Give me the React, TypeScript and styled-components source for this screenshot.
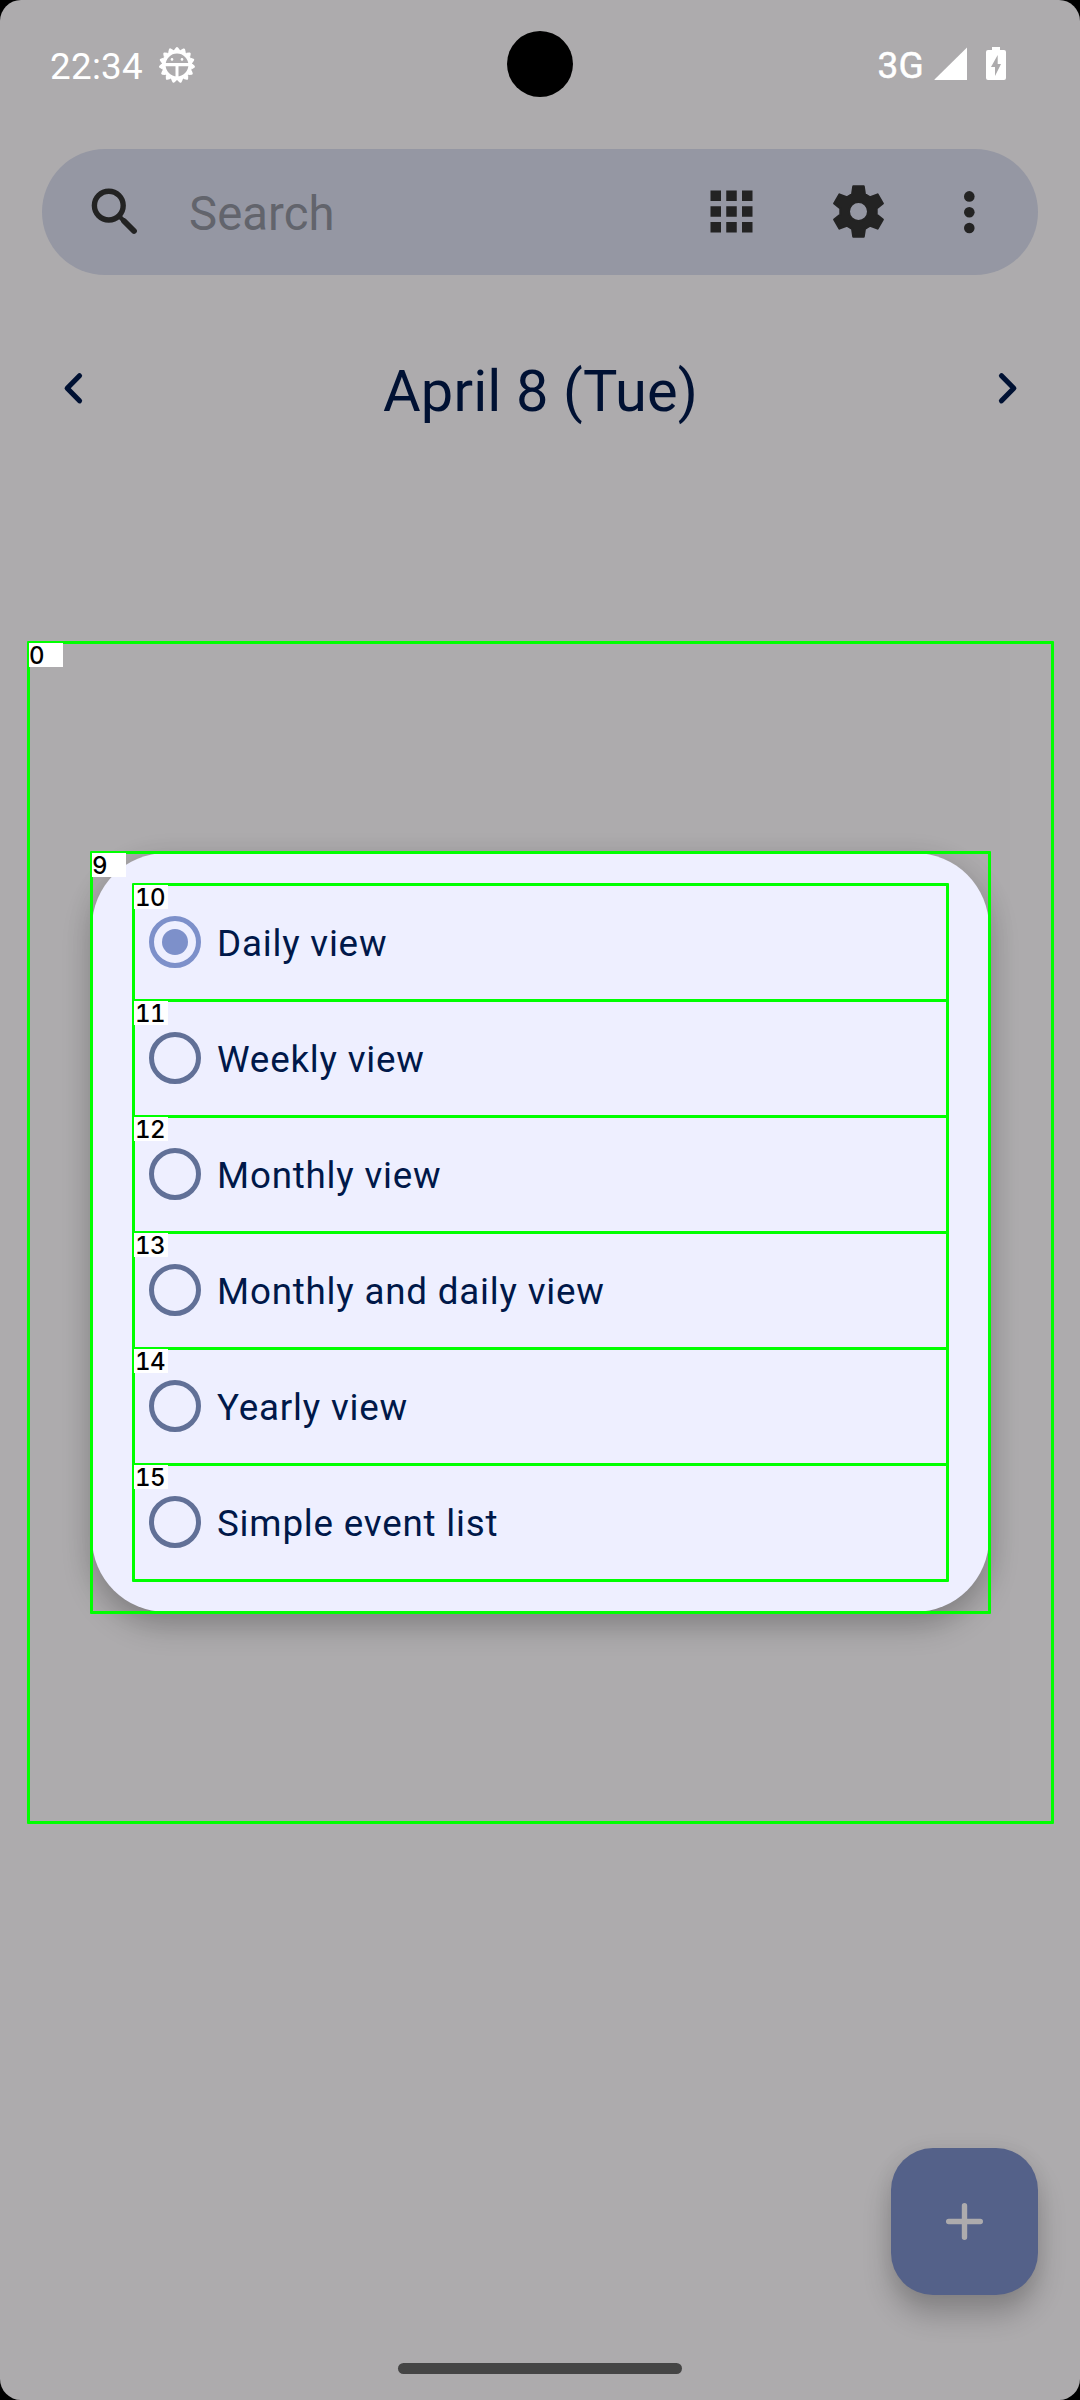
import React from "react";
import styled, { createGlobalStyle, css } from "styled-components";

const color = {
  page: "#adabad",
  bar: "#9597a3",
  icon: "#232323",
  hint: "#62646c",
  title: "#001133",
  card: "#eeefff",
  label: "#001849",
  radio: "#617097",
  radioOn: "#7d90ca",
  fab: "#546189",
  frame: "#00ff00",
};

const GlobalStyle = createGlobalStyle`
  body { margin: 0; background: #000; }
  * { box-sizing: border-box; }
`;

const Screen = styled.main`
  position: relative;
  display: flex;
  flex-direction: column;
  width: 1080px;
  height: 2400px;
  overflow: hidden;
  border-radius: 21px;
  background: ${color.page};
  font-family: Roboto, sans-serif;
`;

const StatusBar = styled.header`
  display: flex;
  justify-content: space-between;
  height: 149px;
  padding: 44px 72px 0 50px;
  color: #fff;
`;

const StatusGroup = styled.div`
  display: flex;
  align-items: flex-start;
`;

const Clock = styled.span`
  margin-top: 1px;
  font-size: 36.75px;
  line-height: 43px;
  letter-spacing: 0.3px;
`;

const Network = styled.span`
  font-size: 37px;
  line-height: 43px;
  letter-spacing: 0.2px;
  -webkit-text-stroke: 0.5px #fff;
`;

const Camera = styled.div`
  position: absolute;
  top: 31px;
  left: 507px;
  width: 66px;
  height: 66px;
  border-radius: 50%;
  background: #000;
`;

const Icon = styled.svg`
  display: block;
  flex: none;
`;

const SearchBar = styled.div`
  display: flex;
  align-items: center;
  flex: none;
  height: 126px;
  margin: 0 42px;
  padding: 0 37px 0 42px;
  border-radius: 63px;
  background: ${color.bar};
  color: ${color.icon};
`;

const SearchHint = styled.span`
  flex: 1;
  margin-left: 42px;
  padding-top: 3px;
  color: ${color.hint};
  font-size: 47.25px;
  line-height: 56px;
  letter-spacing: 0.1px;
`;

const BarActions = styled.div`
  display: grid;
  grid-template-columns: 127px 111px 63px;
  align-items: center;
  margin-bottom: 1px;
`;

const DateNav = styled.nav`
  display: flex;
  align-items: center;
  justify-content: space-between;
  height: 226px;
  padding: 0 41px 0 42px;
  color: ${color.title};
`;

const DateTitle = styled.h1`
  margin: 6px 0 0;
  font-size: 57.75px;
  line-height: 68px;
  font-weight: 400;
  letter-spacing: 0.15px;
`;

const Fab = styled.button`
  position: absolute;
  right: 42px;
  bottom: 105px;
  display: grid;
  place-items: center;
  width: 147px;
  height: 147px;
  padding: 0;
  border: 0;
  border-radius: 42px;
  background: ${color.fab};
  color: ${color.page};
  box-shadow: 0 20px 28px rgba(0, 0, 0, 0.22), 0 0 20px rgba(0, 0, 0, 0.06);
`;

const HomeHandle = styled.div`
  align-self: center;
  width: 284px;
  height: 11px;
  margin: auto 0 26px;
  border-radius: 6px;
  background: #454545;
`;

const DialogLayer = styled.div`
  position: absolute;
  inset: 0;
  display: flex;
  align-items: flex-start;
  padding: 643px 28px 0 29px;
`;

/* Green outline drawn over an element, straddling its edge. */
const framed = css<{ $bottom?: number }>`
  position: relative;
  &::after {
    content: "";
    position: absolute;
    inset: -2px -2px ${(p) => p.$bottom ?? -2}px -2px;
    border: 3px solid ${color.frame};
    border-radius: 1px;
    pointer-events: none;
  }
`;

const WindowArea = styled.div`
  ${framed}
  display: grid;
  place-items: center;
  width: 1023px;
  height: 1179px;
`;

const CardFrame = styled.div`
  ${framed}
  width: 897px;
  height: 759px;
`;

const Card = styled.section`
  height: 100%;
  padding: 32px 42px;
  border-radius: 74px;
  background: ${color.card};
  box-shadow: 0 14px 30px rgba(0, 0, 0, 0.21), 0 4px 30px rgba(0, 0, 0, 0.08);
`;

const OptionRow = styled.label`
  ${framed}
  display: flex;
  align-items: center;
  gap: 16px;
  height: 116px;
  padding: 0 0 2px 15px;
`;

const Radio = styled.span<{ $on: boolean }>`
  display: grid;
  place-items: center;
  width: 52px;
  height: 52px;
  border: 5px solid ${(p) => (p.$on ? color.radioOn : color.radio)};
  border-radius: 50%;
`;

const RadioDot = styled.span`
  width: 26px;
  height: 26px;
  border-radius: 50%;
  background: ${color.radioOn};
`;

const OptionText = styled.span`
  padding-top: 2px;
  color: ${color.label};
  font-size: 36.75px;
  line-height: 43px;
  letter-spacing: 0.8px;
`;

const Tag = styled.span<{ $wide?: boolean }>`
  position: absolute;
  z-index: 1;
  top: 0;
  left: 0;
  width: 34px;
  height: 24px;
  padding-left: ${(p) => (p.$wide ? 1 : 0)}px;
  background: #fff;
  color: #000;
  font: 500 24px/25px Inter, sans-serif;
  font-variant-numeric: tabular-nums;
  letter-spacing: -0.6px;
`;

const BugIcon = () => {
  const teeth = Array.from({ length: 15 }, (_, i) => i * 24 + 12);
  return (
    <Icon width="38" height="38" viewBox="-19 -19 38 38" fill="none" stroke="currentColor">
      <circle r="13.3" strokeWidth="3.8" />
      {teeth.map((a) => (
        <path key={a} d="M-1.8 14.5L0 16.8L1.8 14.5" strokeWidth="2.5" strokeLinejoin="round" transform={`rotate(${a})`} />
      ))}
      <path d="M-13 -.4H13" strokeWidth="3.2" />
      <path d="M0 0V12" strokeWidth="3" />
      <circle cx="-5" cy="-5.6" r="1.3" fill="currentColor" stroke="none" />
      <circle cx="5" cy="-5.6" r="1.3" fill="currentColor" stroke="none" />
    </Icon>
  );
};

const SignalIcon = () => (
  <Icon width="34" height="34" viewBox="0 0 34 34" fill="currentColor">
    <path d="M.5 33V32.6L33 .4V33Z" />
  </Icon>
);

const BatteryIcon = () => (
  <Icon width="20" height="33" viewBox="0 0 20 33" fill="currentColor" fillRule="evenodd">
    <path d="M6 0h8v3h4a2 2 0 0 1 2 2v26a2 2 0 0 1-2 2H2a2 2 0 0 1-2-2V5a2 2 0 0 1 2-2h4zM11.7 8L5 20h4v9l6-12h-3.3z" />
  </Icon>
);

const SearchIcon = () => (
  <Icon width="63" height="63" viewBox="0 0 63 63" fill="none" stroke="currentColor">
    <circle cx="24.8" cy="24.6" r="14.4" strokeWidth="5.4" />
    <path d="M35 35L41 41" strokeWidth="4.5" />
    <path d="M40 40L50 50" strokeWidth="5.8" strokeLinecap="round" />
  </Icon>
);

const AppsIcon = () => (
  <Icon width="63" height="63" viewBox="0 0 24 24" fill="currentColor">
    {[4, 10, 16].map((y) => [4, 10, 16].map((x) => <rect key={`${x}-${y}`} x={x} y={y} width="4" height="4" />))}
  </Icon>
);

const gearPoints = [0, 60, 120, 180, 240, 300]
  .flatMap((deg) => {
    const a = (deg * Math.PI) / 180;
    return [[-6.4, -17.2], [-5.2, -25.1], [5.2, -25.1], [6.4, -17.2]].map(
      ([x, y]) => `${(x * Math.cos(a) - y * Math.sin(a)).toFixed(2)},${(x * Math.sin(a) + y * Math.cos(a)).toFixed(2)}`
    );
  })
  .join("L");

const GearIcon = () => (
  <Icon width="63" height="63" viewBox="-31.5 -31.5 63 63" fill="currentColor" fillRule="evenodd">
    <path
      d={`M${gearPoints}ZM-9.6,0A9.6,9.6 0 1 0 9.6,0A9.6,9.6 0 1 0 -9.6,0Z`}
      stroke="currentColor"
      strokeWidth="2.2"
      strokeLinejoin="round"
    />
  </Icon>
);

const MoreIcon = () => (
  <Icon width="63" height="63" viewBox="0 0 63 63" fill="currentColor">
    {[16.4, 32.2, 48].map((y) => (
      <circle key={y} cx="31.3" cy={y} r="5.3" />
    ))}
  </Icon>
);

const Chevron = ({ flip }: { flip?: boolean }) => (
  <Icon width="63" height="63" viewBox="0 0 63 63" fill="none" stroke="currentColor" strokeWidth="5.2" strokeLinecap="round" strokeLinejoin="round">
    <path d={flip ? "M25.5 18.8L37.8 31.3L25.5 43.8" : "M37.5 18.8L25.2 31.3L37.5 43.8"} />
  </Icon>
);

const PlusIcon = () => (
  <Icon width="63" height="63" viewBox="0 0 63 63" fill="none" stroke="currentColor" strokeWidth="5.4" strokeLinecap="round">
    <path d="M31.5 15.7V47.3M15.7 31.5H47.3" />
  </Icon>
);

const options = [
  { id: 10, label: "Daily view" },
  { id: 11, label: "Weekly view" },
  { id: 12, label: "Monthly view" },
  { id: 13, label: "Monthly and daily view" },
  { id: 14, label: "Yearly view" },
  { id: 15, label: "Simple event list" },
];

const BugSlot = styled.div`
  margin: 2px 0 0 15px;
`;
const SignalSlot = styled.div`
  margin: 3px 18px 0 10px;
`;
const BatterySlot = styled.div`
  margin: 3px 2px 0 0;
`;

export default function App() {
  const selected = 10;
  return (
    <>
      <GlobalStyle />
      <Screen>
        <StatusBar>
          <StatusGroup>
            <Clock>22:34</Clock>
            <BugSlot><BugIcon /></BugSlot>
          </StatusGroup>
          <StatusGroup>
            <Network>3G</Network>
            <SignalSlot><SignalIcon /></SignalSlot>
            <BatterySlot><BatteryIcon /></BatterySlot>
          </StatusGroup>
        </StatusBar>
        <Camera />
        <SearchBar>
          <SearchIcon />
          <SearchHint>Search</SearchHint>
          <BarActions>
            <AppsIcon />
            <GearIcon />
            <MoreIcon />
          </BarActions>
        </SearchBar>
        <DateNav>
          <Chevron />
          <DateTitle>April 8 (Tue)</DateTitle>
          <Chevron flip />
        </DateNav>
        <HomeHandle />
        <Fab aria-label="New event"><PlusIcon /></Fab>
        <DialogLayer>
          <WindowArea>
            <Tag>0</Tag>
            <CardFrame>
              <Card>
                {options.map((o) => (
                  <OptionRow key={o.id} $bottom={-1}>
                    <Tag $wide>{o.id}</Tag>
                    <Radio $on={o.id === selected}>{o.id === selected && <RadioDot />}</Radio>
                    <OptionText>{o.label}</OptionText>
                  </OptionRow>
                ))}
              </Card>
              <Tag>9</Tag>
            </CardFrame>
          </WindowArea>
        </DialogLayer>
      </Screen>
    </>
  );
}
